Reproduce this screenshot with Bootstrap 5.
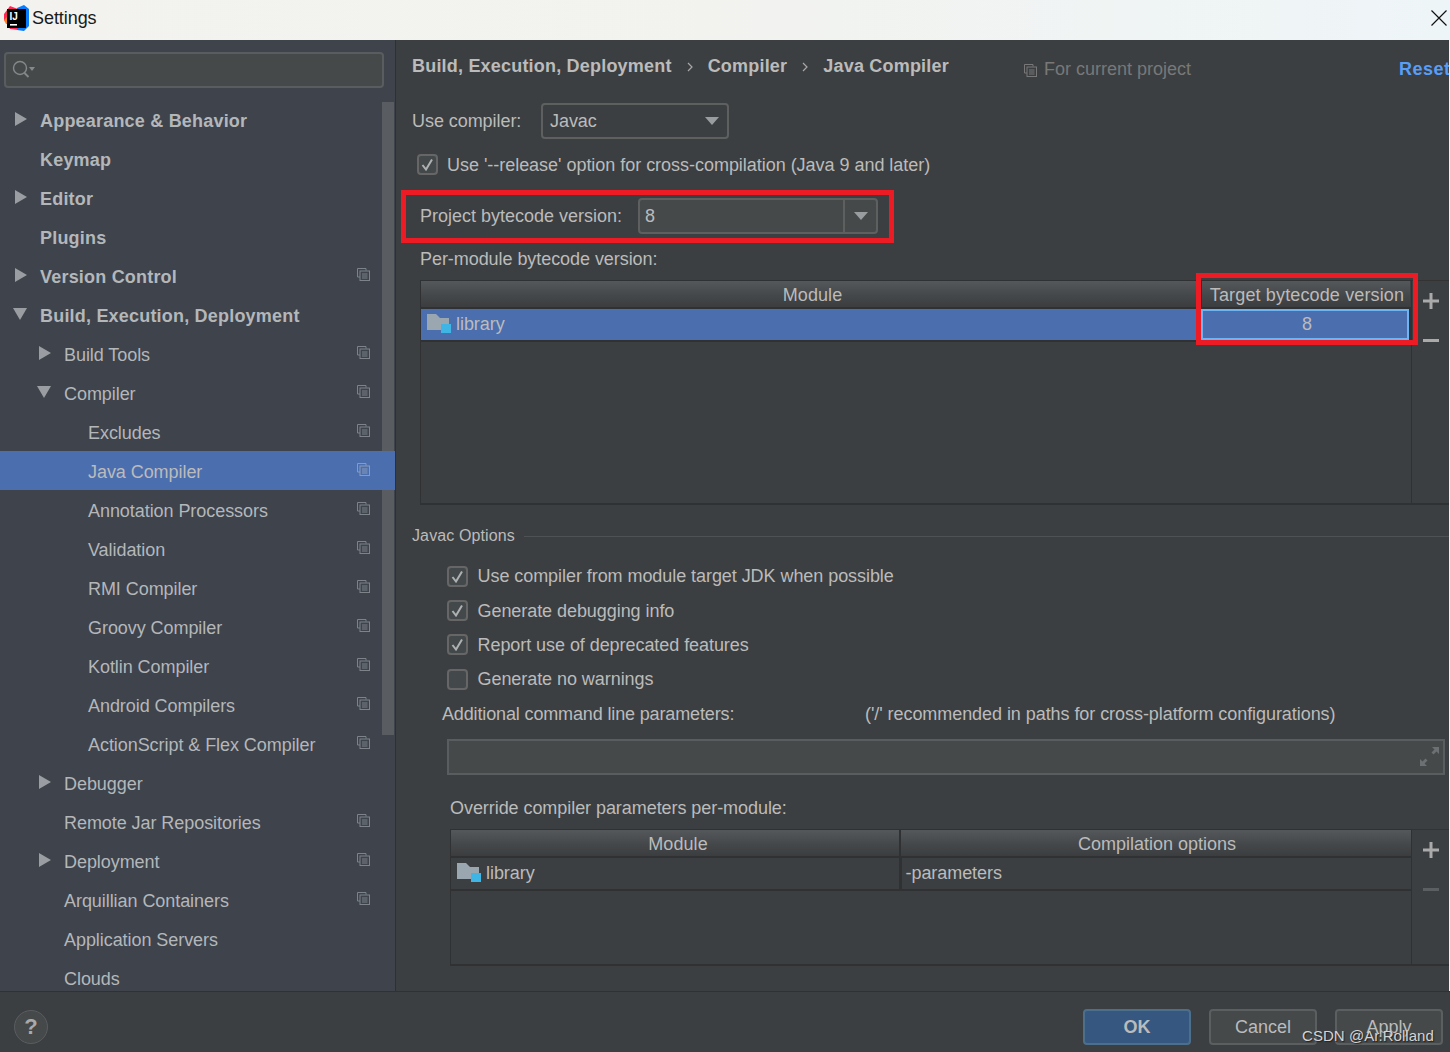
<!DOCTYPE html>
<html lang="en">
<head>
<meta charset="utf-8">
<title>Settings</title>
<link href="https://cdn.jsdelivr.net/npm/bootstrap@5.3.0/dist/css/bootstrap.min.css" rel="stylesheet">
<style>
html,body{height:100%;margin:0;overflow:hidden}
body{width:1450px;height:1052px;background:#3c3f41;color:#bbb;font-family:"Liberation Sans",Arial,sans-serif;font-size:18px;line-height:24px;letter-spacing:-.06px}
.titlebar{height:40px;background:linear-gradient(90deg,#f3f2ee 0,#f2f3f0 55%,#eef5f8 100%);color:#1a1a1a}
.titlebar svg.logo{margin-left:4px;margin-right:3px;margin-top:-4px}
.titlebar .wintitle{font-size:18px;margin-top:-4px}
.closex{margin-right:3px;margin-top:-4px}
.content{height:951px}
.side{width:396px;background:#3e434c;border-right:1px solid #2e3032;overflow:hidden;flex:none}
.searchbox{margin:12px 0 0 4px;width:380px;height:36px;background:#45494a;border:2px solid #5a5d5f;border-radius:4px;padding-left:6px}
.tree{margin-top:12px}
.trow{height:39px;color:#b4b7ba;padding-top:2px}
.trow.top{font-weight:700;letter-spacing:.2px}
.trow.sel{background:#4b6eaf;color:#bbb;position:relative;z-index:2}
.trow.sel .cp{stroke:#8a9bb8}
.l0{padding-left:13px}.l1{padding-left:37px}.l2{padding-left:88px}
.tw{width:27px;flex:none;height:16px;margin-top:-3px}
.cp{margin-left:auto;margin-right:25px;flex:none;fill:none;stroke:#7d8389;margin-top:-5px}
.thumb{position:absolute;left:382px;top:102px;width:12px;height:633px;background:#595c61;z-index:1}
.main{width:1053px;flex:none;overflow:hidden;background:#3c3f41}
.edge{width:1px;flex:none;background:#f2f4f4}
.inner{width:1060px}
.hdr{height:63px;padding-left:16px}
.crumbs{margin-top:15px;font-weight:700;height:22px;line-height:22px;white-space:nowrap;width:612px;letter-spacing:.2px}
.crumbs svg{margin:0 14px}
.fcp{margin-top:18px;color:#787878;height:22px;line-height:22px;white-space:nowrap;width:375px;letter-spacing:0}
.fcp svg{margin-right:7px;fill:none;stroke:#787878}
.reset{margin-top:18px;color:#589df6;font-weight:700;line-height:22px;letter-spacing:.5px}
.crow{height:36px;padding-left:16px}
.crow .lb{width:129px}
.combo{background:#3c3f41;border:2px solid #5e6060;border-radius:4px;height:36px;padding-left:7px}
.c1{width:188px}
.c2{width:240px;background:#45494a;padding-left:5px}
.combo .arrow{margin-left:auto;margin-right:8px}
.c2 .arrow{margin:0 0 0 auto;width:33px;height:100%;border-left:2px solid #5e6060}
.ckrow1{margin-top:15px;height:21px;padding-left:21px;letter-spacing:-.03px}
.ck{width:21px;height:21px;border:2px solid #666;border-radius:4px;background:#43494a;flex:none;margin-right:9px}
.ck svg{display:block;margin:2px}
.byte{margin-top:23px;height:36px;padding-left:24px}
.byte .lb{width:219px;letter-spacing:0;flex:none;margin-right:-1px}
.permod{margin-top:13px;height:24px;padding-left:24px}
.tblwrap{margin-top:9px;margin-left:24px;height:225px}
.tblwrap.two{margin-left:54px;height:137px}
.tb{flex:none;border:1px solid #303132;border-bottom-width:2px;border-right-width:0;height:100%;overflow:hidden}
.t1{width:991px}.t2{width:961px}
.tools{width:40px;border-left:1px solid #303132;height:100%;flex:none;border-top:1px solid #333;border-bottom:2px solid #303132}
.tools .pl{margin:12px 0 0 11px;display:block}
.tools .mn{margin:30px 0 0 11px;display:block}
.grid{width:100%;table-layout:fixed;border-collapse:collapse}
.grid th{height:27px;padding:2px 0 0;font-weight:400;text-align:center;background:linear-gradient(180deg,#55585b 0,#45484a 55%,#3b3d3f 100%);border-bottom:2px solid #303132;line-height:24px;letter-spacing:.08px}
.t1 th:first-child{padding-left:4px}
.t1 th.vs{padding-left:2px;letter-spacing:.14px}
.t2 th:first-child{padding-left:6px}
.t2 th.vs{padding-left:2px;letter-spacing:0}
.grid td{height:33px;padding:0 5px;border-bottom:2px solid #303132;line-height:24px;white-space:nowrap}
.grid td .fo{vertical-align:-3px;margin-right:5px}
.grid tr.picked td{background:#4b6eaf;padding-bottom:2px}
.grid td.focuscell{text-align:center;background:#4b6eaf;box-shadow:inset 0 0 0 2px #6eb4f5;padding-left:9px;border-right:2px solid #303132}
.grid th.vs{border-left:2px solid #303132}
.grid td.vs{border-left:3px solid #303132;padding-left:4px}
.grid td.pd{padding-left:6px}
.grp{margin-top:19px;height:24px;padding-left:16px;font-size:16px;letter-spacing:.12px}
.grp hr{flex:1;margin:0 0 0 9px;border:0;border-top:1px solid #4f5254;opacity:1}
.checks{margin-top:11px;padding-left:50.5px}
.chk{height:34.4px}
.chk .ck{margin-right:10px}
.adds{margin-top:5px;height:24px;padding-left:46px}
.adds .lb{width:423px;letter-spacing:-.14px}
.field{margin-left:51px;margin-top:13px;width:998px;height:36px;background:#45494a;border:2px solid #5a5d5f;padding-right:4px}
.ovr{margin-top:21px;height:24px;padding-left:54px}
.foot{height:61px;border-top:1px solid #2f3133;background:#3c3f41;padding:10px 7px 0 14px}
.helpb{width:34px;height:34px;border-radius:50%;background:#45494a;border:1px solid #5a5d5f;font-weight:700;font-size:22px;padding:0;color:#aaa;line-height:30px}
.btn.dlg{width:108px;height:36px;padding:0;border-radius:4px;background:#45494a;border:2px solid #5b5f60;color:#bbb;font-size:18px;line-height:24px;margin-left:18px}
.btn.dlg.ok{background:#365880;border-color:#4c708c;color:#bbb;font-weight:700;margin-left:0}
.redbox{position:absolute;border:5px solid #ed1c24;pointer-events:none;z-index:3}
.r1{left:401px;top:190px;width:493px;height:53px}
.r2{left:1196px;top:273px;width:222px;height:72px}
.wmark{position:absolute;left:1302px;top:1024px;color:#d4d4d4;font-size:15px;line-height:24px;text-shadow:1px 1px 1px #222;white-space:nowrap;z-index:3;letter-spacing:.05px}
</style>
</head>
<body class="position-relative">
<div class="titlebar d-flex align-items-center">
  <svg class="logo" width="25" height="30" viewBox="0 0 25 30">
    <path d="M0 11 6 3l8 3 3-1-3 22-8-1-3-6-3-3z" fill="#fe2857"/>
    <path d="M0 17l4-4 2 8-4 0z" fill="#fc801d"/>
    <path d="M13 5l7-3 5 4v17l-5 5-7-1z" fill="#087cfa"/>
    <rect x="3" y="6" width="19" height="19" fill="#000"/>
    <text x="5.5" y="17" font-family="Liberation Sans" font-weight="700" font-size="10" fill="#fff">IJ</text>
    <rect x="6" y="21" width="7" height="1.6" fill="#fff"/>
  </svg>
  <span class="wintitle">Settings</span>
  <svg class="closex ms-auto" width="16" height="16" viewBox="0 0 16 16"><path d="M.5.5l15 15M15.500.5l-15 15" stroke="#111" stroke-width="1.2" fill="none"/></svg>
</div>
<div class="content d-flex">
  <div class="side">
    <div class="searchbox d-flex align-items-center">
      <svg width="28" height="22" viewBox="0 0 28 22" fill="none"><circle cx="8" cy="9" r="6.500" stroke="#85898b" stroke-width="1.400"/><path d="M12.500 14l4 4" stroke="#85898b" stroke-width="1.800"/><path d="M17 8h6l-3 4z" fill="#85898b"/></svg>
    </div>
    <div class="tree" id="tree"></div>
  </div>
  <div class="main">
    <div class="inner">
      <div class="hdr d-flex">
        <div class="crumbs">Build, Execution, Deployment<svg width="8" height="12" viewBox="0 0 8 12" fill="none"><path d="M2 2l4 4-4 4" stroke="#a8a8a8" stroke-width="1.200"/></svg>Compiler<svg width="8" height="12" viewBox="0 0 8 12" fill="none"><path d="M2 2l4 4-4 4" stroke="#a8a8a8" stroke-width="1.200"/></svg>Java Compiler</div>
        <div class="fcp"><svg width="13" height="13" viewBox="0 0 13 13"><path d="M9 2.500V.5H.5V9h2.500"/><rect x="3" y="3" width="9.500" height="9.500"/><path d="M5 6h5.500M5 8h5.500M5 10h5.500"/></svg>For current project</div>
        <div class="reset">Reset</div>
      </div>
      <div class="crow d-flex align-items-center">
        <div class="lb">Use compiler:</div>
        <div class="combo c1 d-flex align-items-center">Javac<svg class="arrow" width="14" height="8" viewBox="0 0 14 8"><path d="M0 0h14L7 8z" fill="#9a9d9f"/></svg></div>
      </div>
      <div class="ckrow1 d-flex align-items-center">
        <div class="ck"><svg width="13" height="13" viewBox="0 0 13 13" fill="none"><path d="M1.500 7l3.500 4.500L11 1.500" stroke="#aeb0b1" stroke-width="2"/></svg></div>
        <span>Use '--release' option for cross-compilation (Java 9 and later)</span>
      </div>
      <div class="byte d-flex align-items-center">
        <div class="lb">Project bytecode version:</div>
        <div class="combo c2 d-flex align-items-center">8<div class="arrow d-flex align-items-center justify-content-center"><svg width="14" height="8" viewBox="0 0 14 8"><path d="M0 0h14L7 8z" fill="#9a9d9f"/></svg></div></div>
      </div>
      <div class="permod">Per-module bytecode version:</div>
      <div class="tblwrap d-flex">
        <div class="tb t1">
          <table class="grid">
            <colgroup><col><col style="width:209px"></colgroup>
            <tr><th>Module</th><th class="vs">Target bytecode version</th></tr>
            <tr class="picked"><td class="pd"><svg class="fo" width="24" height="19" viewBox="0 0 24 19"><path d="M0 0h9l4 4h9v12H0z" fill="#9aa7b0"/><rect x="14" y="10" width="10" height="9" fill="#3fb5e6"/></svg>library</td><td class="focuscell">8</td></tr>
          </table>
        </div>
        <div class="tools">
          <svg class="pl" width="16" height="16" viewBox="0 0 16 16"><path d="M8 0v16M0 8h16" stroke="#aaa" stroke-width="3"/></svg>
          <svg class="mn" width="16" height="3" viewBox="0 0 16 3"><path d="M0 1.500h16" stroke="#aaa" stroke-width="3"/></svg>
        </div>
      </div>
      <div class="grp d-flex align-items-center"><span>Javac Options</span><hr></div>
      <div class="checks">
        <div class="chk d-flex align-items-center"><div class="ck"><svg width="13" height="13" viewBox="0 0 13 13" fill="none"><path d="M1.500 7l3.500 4.500L11 1.500" stroke="#aeb0b1" stroke-width="2"/></svg></div>Use compiler from module target JDK when possible</div>
        <div class="chk d-flex align-items-center"><div class="ck"><svg width="13" height="13" viewBox="0 0 13 13" fill="none"><path d="M1.500 7l3.500 4.500L11 1.500" stroke="#aeb0b1" stroke-width="2"/></svg></div>Generate debugging info</div>
        <div class="chk d-flex align-items-center"><div class="ck"><svg width="13" height="13" viewBox="0 0 13 13" fill="none"><path d="M1.500 7l3.500 4.500L11 1.500" stroke="#aeb0b1" stroke-width="2"/></svg></div>Report use of deprecated features</div>
        <div class="chk d-flex align-items-center"><div class="ck"></div>Generate no warnings</div>
      </div>
      <div class="adds d-flex align-items-center"><div class="lb">Additional command line parameters:</div><div class="text-nowrap">('/' recommended in paths for cross-platform configurations)</div></div>
      <div class="field d-flex align-items-center justify-content-end">
        <svg width="19" height="19" viewBox="0 0 19 19"><path d="M12 0h7v7l-2.500-2.500-3 3-2-2 3-3zM0 12l2.500 2.500 3-3 2 2-3 3L7 19H0z" fill="#6d7072"/></svg>
      </div>
      <div class="ovr">Override compiler parameters per-module:</div>
      <div class="tblwrap two d-flex">
        <div class="tb t2">
          <table class="grid">
            <colgroup><col style="width:449px"><col></colgroup>
            <tr><th>Module</th><th class="vs">Compilation options</th></tr>
            <tr><td class="pd"><svg class="fo" width="24" height="19" viewBox="0 0 24 19"><path d="M0 0h9l4 4h9v12H0z" fill="#9aa7b0"/><rect x="14" y="10" width="10" height="9" fill="#3fb5e6"/></svg>library</td><td class="vs">-parameters</td></tr>
          </table>
        </div>
        <div class="tools">
          <svg class="pl" width="16" height="16" viewBox="0 0 16 16"><path d="M8 0v16M0 8h16" stroke="#aaa" stroke-width="3"/></svg>
          <svg class="mn" width="16" height="3" viewBox="0 0 16 3"><path d="M0 1.500h16" stroke="#5c5f61" stroke-width="3"/></svg>
        </div>
      </div>
    </div>
  </div>
  <div class="edge"></div>
</div>
<div class="foot d-flex align-items-center">
  <button class="btn helpb" type="button">?</button>
  <button class="btn dlg ok ms-auto" type="button">OK</button>
  <button class="btn dlg" type="button">Cancel</button>
  <button class="btn dlg" type="button">Apply</button>
</div>
<div class="thumb"></div>
<div class="redbox r1"></div>
<div class="redbox r2"></div>
<div class="wmark">CSDN @Ar.Rolland</div>
<script>
var rows=[["Appearance &amp; Behavior",0,"r",0],["Keymap",0,"",0],["Editor",0,"r",0],["Plugins",0,"",0],["Version Control",0,"r",1],["Build, Execution, Deployment",0,"d",0],["Build Tools",1,"r",1],["Compiler",1,"d",1],["Excludes",2,"",1],["Java Compiler",2,"",1,1],["Annotation Processors",2,"",1],["Validation",2,"",1],["RMI Compiler",2,"",1],["Groovy Compiler",2,"",1],["Kotlin Compiler",2,"",1],["Android Compilers",2,"",1],["ActionScript &amp; Flex Compiler",2,"",1],["Debugger",1,"r",0],["Remote Jar Repositories",1,"",1],["Deployment",1,"r",1],["Arquillian Containers",1,"",1],["Application Servers",1,"",0],["Clouds",1,"",0]];
var cp='<svg class="cp" width="13" height="13" viewBox="0 0 13 13"><path d="M9 2.500V.5H.5V9h2.500"/><rect x="3" y="3" width="9.500" height="9.500"/><path d="M5 6h5.500M5 8h5.500M5 10h5.500"/></svg>';
var tri={r:'<svg class="tw" viewBox="0 0 27 16"><path d="M2 1l12 7-12 7z" fill="#9a9da1"/></svg>',d:'<svg class="tw" viewBox="0 0 27 16"><path d="M0 2h14L7 14z" fill="#9a9da1"/></svg>',"":'<span class="tw"></span>'};
document.getElementById("tree").innerHTML=rows.map(function(r){
 return '<div class="trow d-flex align-items-center l'+r[1]+(r[1]==0?' top':'')+(r[4]?' sel':'')+'">'+(r[1]<2?tri[r[2]]:'')+'<span>'+r[0]+'</span>'+(r[3]?cp:'')+'</div>';
}).join("");
</script>
</body>
</html>
